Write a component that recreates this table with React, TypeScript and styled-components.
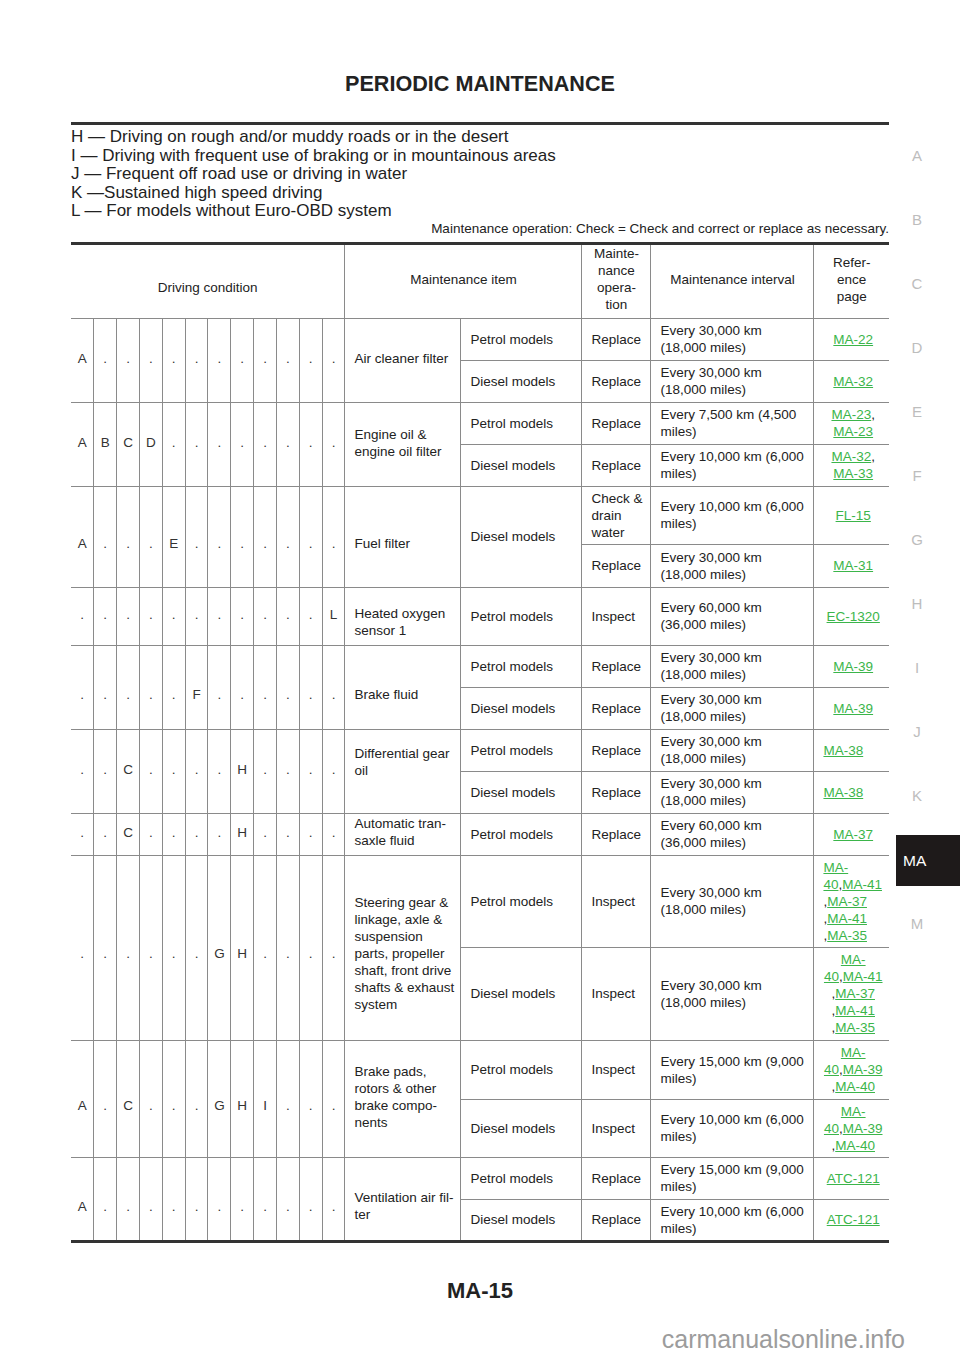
import React from "react";
import styled, { createGlobalStyle } from "styled-components";

const Global = createGlobalStyle`
  html, body { margin: 0; padding: 0; background: #fff; }
  body { font-family: "Liberation Sans", Arial, Helvetica, sans-serif; color: #222; }
`;

const shiftPad = (s?: number) =>
  !s ? "0px 0px" : s > 0 ? `${s * 2}px 0px` : `0px ${-s * 2}px`;

const Page = styled.div`
  width: 960px;
  display: flex;
  flex-direction: column;
`;

const Body = styled.div`
  display: flex;
  flex-direction: row;
`;

const Main = styled.main`
  margin-left: 71px;
  width: 818px;
  display: flex;
  flex-direction: column;
`;

const Title = styled.h1`
  margin: 0;
  padding-top: 72px;
  font-size: 21.6px;
  line-height: 24px;
  font-weight: bold;
  text-align: center;
  color: #222;
`;

const Rule = styled.div`
  height: 3px;
  background: #333;
  margin-top: 26px;
`;

const Legend = styled.div`
  margin-top: 3px;
  font-size: 17px;
  line-height: 18.5px;
  display: flex;
  flex-direction: column;
`;

const Note = styled.div`
  margin-top: 0px;
  font-size: 13.5px;
  line-height: 15px;
  text-align: right;
`;

const Table = styled.table`
  margin-top: 6px;
  width: 818px;
  table-layout: fixed;
  border-collapse: collapse;
  border-top: 3px solid #333;
  border-bottom: 3px solid #333;
  font-size: 13.5px;
  line-height: 17px;
  color: #222;
`;

const Row = styled.tr<{ $h: number }>`
  height: ${(p) => p.$h}px;
`;

const Th = styled.th<{ $top?: number }>`
  font-weight: normal;
  text-align: center;
  vertical-align: middle;
  white-space: pre;
  padding: ${(p) => p.$top ?? 0}px 0 4px 0;
  border-left: 1px solid #8a8a8a;
  &:first-child { border-left: none; }
`;

const CondCell = styled.td<{ $first?: boolean; $shift?: number }>`
  text-align: center;
  vertical-align: middle;
  padding: 0;
  padding-top: ${(p) => shiftPad(p.$shift).split(" ")[0]};
  padding-bottom: ${(p) => shiftPad(p.$shift).split(" ")[1]};
  color: #333;
  border-top: 1px solid #8a8a8a;
  border-left: ${(p) => (p.$first ? "none" : "1px solid #8a8a8a")};
`;

const Cell = styled.td<{ $shift?: number }>`
  text-align: left;
  vertical-align: middle;
  white-space: pre;
  padding: 0 2px 0 9px;
  padding-top: ${(p) => shiftPad(p.$shift).split(" ")[0]};
  padding-bottom: ${(p) => shiftPad(p.$shift).split(" ")[1]};
  border-top: 1px solid #8a8a8a;
  border-left: 1px solid #8a8a8a;
`;

const RefCell = styled.td<{ $align?: "left" | "center" }>`
  text-align: ${(p) => p.$align ?? "center"};
  vertical-align: middle;
  padding: ${(p) => (p.$align === "left" ? "0 0 0 9px" : "0 0 0 3px")};
  border-top: 1px solid #8a8a8a;
  border-left: 1px solid #8a8a8a;
`;

const Link = styled.a`
  color: #3bb54a;
  text-decoration: underline;
`;

const Side = styled.aside`
  margin-left: 7px;
  width: 64px;
  padding-top: 124px;
  display: flex;
  flex-direction: column;
`;

const SideLetter = styled.div`
  height: 64px;
  width: 42px;
  line-height: 64px;
  text-align: center;
  font-size: 15px;
  color: #bdbdbd;
`;

const SideSlot = styled.div`
  height: 64px;
  padding-top: 7px;
  box-sizing: border-box;
`;

const SideActive = styled.div`
  height: 51px;
  background: #1e1a1a;
  color: #fff;
  font-size: 15.5px;
  line-height: 51px;
  padding-left: 7px;
`;

const Footer = styled.footer`
  display: flex;
  flex-direction: column;
`;

const PageNum = styled.div`
  margin-top: 35px;
  text-align: center;
  font-size: 22px;
  line-height: 26px;
  font-weight: bold;
  color: #222;
`;

const Watermark = styled.div`
  margin-top: 21px;
  padding-right: 55px;
  text-align: right;
  font-size: 25px;
  line-height: 28px;
  color: #9c9c9c;
`;

const L = ({ children }: { children: React.ReactNode }) => <Link>{children}</Link>;

type Sub = {
  model?: string;
  modelSpan?: number;
  op: string;
  interval: string;
  refs: React.ReactNode;
  refAlign?: "left" | "center";
  h: number;
};

type Group = { cond: string; item: string; condShift: number; itemShift: number; subs: Sub[] };

const E30 = "Every 30,000 km\n(18,000 miles)";

const groups: Group[] = [
  {
    cond: "A...........",
    item: "Air cleaner filter",
    condShift: -2,
    itemShift: -2,
    subs: [
      { model: "Petrol models", op: "Replace", interval: E30, refs: <L>MA-22</L>, h: 42 },
      { model: "Diesel models", op: "Replace", interval: E30, refs: <L>MA-32</L>, h: 42 },
    ],
  },
  {
    cond: "ABCD........",
    item: "Engine oil &\nengine oil filter",
    condShift: -2,
    itemShift: -1,
    subs: [
      {
        model: "Petrol models",
        op: "Replace",
        interval: "Every 7,500 km (4,500\nmiles)",
        refs: (
          <>
            <L>MA-23</L>,<br />
            <L>MA-23</L>
          </>
        ),
        h: 42,
      },
      {
        model: "Diesel models",
        op: "Replace",
        interval: "Every 10,000 km (6,000\nmiles)",
        refs: (
          <>
            <L>MA-32</L>,<br />
            <L>MA-33</L>
          </>
        ),
        h: 42,
      },
    ],
  },
  {
    cond: "A...E.......",
    item: "Fuel filter",
    condShift: 7,
    itemShift: 7,
    subs: [
      {
        model: "Diesel models",
        modelSpan: 2,
        op: "Check &\ndrain\nwater",
        interval: "Every 10,000 km (6,000\nmiles)",
        refs: <L>FL-15</L>,
        h: 58,
      },
      { op: "Replace", interval: E30, refs: <L>MA-31</L>, h: 43 },
    ],
  },
  {
    cond: "...........L",
    item: "Heated oxygen\nsensor 1",
    condShift: -2,
    itemShift: 6,
    subs: [
      {
        model: "Petrol models",
        op: "Inspect",
        interval: "Every 60,000 km\n(36,000 miles)",
        refs: <L>EC-1320</L>,
        h: 58,
      },
    ],
  },
  {
    cond: ".....F......",
    item: "Brake fluid",
    condShift: 7,
    itemShift: 7,
    subs: [
      { model: "Petrol models", op: "Replace", interval: E30, refs: <L>MA-39</L>, h: 42 },
      { model: "Diesel models", op: "Replace", interval: E30, refs: <L>MA-39</L>, h: 42 },
    ],
  },
  {
    cond: "..C....H....",
    item: "Differential gear\noil",
    condShift: -2,
    itemShift: -9,
    subs: [
      { model: "Petrol models", op: "Replace", interval: E30, refs: <L>MA-38</L>, refAlign: "left", h: 42 },
      { model: "Diesel models", op: "Replace", interval: E30, refs: <L>MA-38</L>, refAlign: "left", h: 42 },
    ],
  },
  {
    cond: "..C....H....",
    item: "Automatic tran-\nsaxle fluid",
    condShift: -2,
    itemShift: -2,
    subs: [
      {
        model: "Petrol models",
        op: "Replace",
        interval: "Every 60,000 km\n(36,000 miles)",
        refs: <L>MA-37</L>,
        h: 42,
      },
    ],
  },
  {
    cond: "......GH....",
    item: "Steering gear &\nlinkage, axle &\nsuspension\nparts, propeller\nshaft, front drive\nshafts & exhaust\nsystem",
    condShift: 6,
    itemShift: 6,
    subs: [
      {
        model: "Petrol models",
        op: "Inspect",
        interval: E30,
        refAlign: "left",
        refs: (
          <>
            <L>
              MA-
              <br />
              40
            </L>
            ,<L>MA-41</L>
            <br />,<L>MA-37</L>
            <br />,<L>MA-41</L>
            <br />,<L>MA-35</L>
          </>
        ),
        h: 92,
      },
      {
        model: "Diesel models",
        op: "Inspect",
        interval: E30,
        refs: (
          <>
            <L>
              MA-
              <br />
              40
            </L>
            ,<L>MA-41</L>
            <br />,<L>MA-37</L>
            <br />,<L>MA-41</L>
            <br />,<L>MA-35</L>
          </>
        ),
        h: 93,
      },
    ],
  },
  {
    cond: "A.C...GHI...",
    item: "Brake pads,\nrotors & other\nbrake compo-\nnents",
    condShift: 7,
    itemShift: -2,
    subs: [
      {
        model: "Petrol models",
        op: "Inspect",
        interval: "Every 15,000 km (9,000\nmiles)",
        refs: (
          <>
            <L>
              MA-
              <br />
              40
            </L>
            ,<L>MA-39</L>
            <br />,<L>MA-40</L>
          </>
        ),
        h: 59,
      },
      {
        model: "Diesel models",
        op: "Inspect",
        interval: "Every 10,000 km (6,000\nmiles)",
        refs: (
          <>
            <L>
              MA-
              <br />
              40
            </L>
            ,<L>MA-39</L>
            <br />,<L>MA-40</L>
          </>
        ),
        h: 58,
      },
    ],
  },
  {
    cond: "A...........",
    item: "Ventilation air fil-\nter",
    condShift: 8,
    itemShift: 7,
    subs: [
      {
        model: "Petrol models",
        op: "Replace",
        interval: "Every 15,000 km (9,000\nmiles)",
        refs: <L>ATC-121</L>,
        h: 42,
      },
      {
        model: "Diesel models",
        op: "Replace",
        interval: "Every 10,000 km (6,000\nmiles)",
        refs: <L>ATC-121</L>,
        h: 42,
      },
    ],
  },
];

const legend = [
  "H — Driving on rough and/or muddy roads or in the desert",
  "I — Driving with frequent use of braking or in mountainous areas",
  "J — Frequent off road use or driving in water",
  "K —Sustained high speed driving",
  "L — For models without Euro-OBD system",
];

const sideLetters = ["A", "B", "C", "D", "E", "F", "G", "H", "I", "J", "K", "MA", "M"];

const colWidths = [...Array(12).fill(274 / 12), 116, 121, 69, 163, 75];

export default function App() {
  return (
    <Page>
      <Global />
      <Body>
        <Main>
          <Title>PERIODIC MAINTENANCE</Title>
          <Rule />
          <Legend>
            {legend.map((l) => (
              <div key={l}>{l}</div>
            ))}
          </Legend>
          <Note>Maintenance operation: Check = Check and correct or replace as necessary.</Note>
          <Table>
            <colgroup>
              {colWidths.map((w, i) => (
                <col key={i} width={w} />
              ))}
            </colgroup>
            <tbody>
              <Row $h={75}>
                <Th colSpan={12} $top={16}>
                  Driving condition
                </Th>
                <Th colSpan={2}>Maintenance item</Th>
                <Th>{"Mainte-\nnance\nopera-\ntion"}</Th>
                <Th>Maintenance interval</Th>
                <Th>{"Refer-\nence\npage"}</Th>
              </Row>
              {groups.map((g, gi) =>
                g.subs.map((s, si) => (
                  <Row key={`${gi}-${si}`} $h={s.h}>
                    {si === 0 &&
                      g.cond.split("").map((c, ci) => (
                        <CondCell
                          key={ci}
                          $first={ci === 0}
                          $shift={g.condShift}
                          rowSpan={g.subs.length}
                        >
                          {c}
                        </CondCell>
                      ))}
                    {si === 0 && (
                      <Cell rowSpan={g.subs.length} $shift={g.itemShift}>
                        {g.item}
                      </Cell>
                    )}
                    {s.model !== undefined && <Cell rowSpan={s.modelSpan ?? 1}>{s.model}</Cell>}
                    <Cell>{s.op}</Cell>
                    <Cell>{s.interval}</Cell>
                    <RefCell $align={s.refAlign}>{s.refs}</RefCell>
                  </Row>
                ))
              )}
            </tbody>
          </Table>
        </Main>
        <Side>
          {sideLetters.map((l) =>
            l === "MA" ? (
              <SideSlot key={l}>
                <SideActive>MA</SideActive>
              </SideSlot>
            ) : (
              <SideLetter key={l}>{l}</SideLetter>
            )
          )}
        </Side>
      </Body>
      <Footer>
        <PageNum>MA-15</PageNum>
        <Watermark>carmanualsonline.info</Watermark>
      </Footer>
    </Page>
  );
}
